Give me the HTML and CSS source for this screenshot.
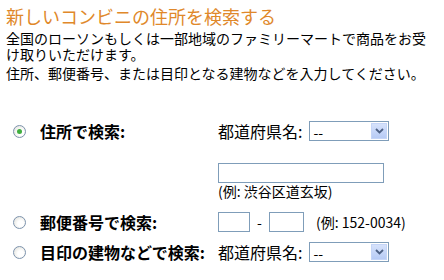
FILE: index.html
```html
<!DOCTYPE html>
<html>
<head>
  <meta charset="utf-8">
  <title>新しいコンビニの住所を検索する</title>
  <link rel="stylesheet" href="styles.css">
</head>
<body>
  <h1 class="title">新しいコンビニの住所を検索する</h1>
  <p class="intro">全国のローソンもしくは一部地域のファミリーマートで商品をお受け取りいただけます。</p>
  <p class="intro second">住所、郵便番号、または目印となる建物などを入力してください。</p>

  <form class="search">
    <div class="row">
      <span class="cell-radio"><input type="radio" name="mode" checked></span>
      <label class="label">住所で検索:</label>
      <span class="field">
        都道府県名:
        <span class="select-wrap">
          <select><option>--</option></select>
          <span class="drop"><svg width="9" height="6" viewBox="0 0 9 6"><path d="M1 1 L4.5 4.5 L8 1" fill="none" stroke="#4d6185" stroke-width="1.8"/></svg></span>
        </span>
      </span>
    </div>

    <div class="row address">
      <span></span>
      <span></span>
      <span class="field stack">
        <input type="text" class="text-long">
        <span class="hint">(例: 渋谷区道玄坂)</span>
      </span>
    </div>

    <div class="row zip">
      <span class="cell-radio"><input type="radio" name="mode"></span>
      <label class="label">郵便番号で検索:</label>
      <span class="field">
        <input type="text" class="zip1">
        <span class="dash">-</span>
        <input type="text" class="zip2">
        <span class="hint zip-hint">(例: 152-0034)</span>
      </span>
    </div>

    <div class="row landmark">
      <span class="cell-radio"><input type="radio" name="mode"></span>
      <label class="label">目印の建物などで検索:</label>
      <span class="field">
        都道府県名:
        <span class="select-wrap">
          <select><option>--</option></select>
          <span class="drop"><svg width="9" height="6" viewBox="0 0 9 6"><path d="M1 1 L4.5 4.5 L8 1" fill="none" stroke="#4d6185" stroke-width="1.8"/></svg></span>
        </span>
      </span>
    </div>
  </form>
</body>
</html>
```

FILE: styles.css
```css
body {
  font-family: "Noto Sans CJK JP", sans-serif;
  background-color: #fff;
  color: #000;
  margin: 0;
  padding: 5px 6px 0 6px;
}
.title {
  font-size: 18px;
  font-weight: normal;
  line-height: 22px;
  color: #e0882a;
  margin: 0;
}
.intro {
  font-size: 14px;
  line-height: 16px;
  margin: 3px 0 0 0;
}
.search {
  margin-top: 40px;
}
.row {
  display: grid;
  grid-template-columns: 34px 178px 1fr;
  align-items: center;
  height: 20px;
}
.row.address {
  margin-top: 22px;
  height: 36px;
  align-items: start;
}
.row.zip {
  margin-top: 13px;
}
.row.landmark {
  margin-top: 10px;
}
.cell-radio {
  display: flex;
  align-items: center;
  padding-left: 7px;
}
.cell-radio input {
  -webkit-appearance: none;
  appearance: none;
  width: 13px;
  height: 13px;
  margin: 0;
  border: 1px solid #7d93ad;
  border-radius: 50%;
  background: radial-gradient(circle at 60% 60%, #ffffff 30%, #dcdcd4 100%);
  box-sizing: border-box;
  position: relative;
}
.cell-radio input:checked::after {
  content: "";
  position: absolute;
  left: 3px;
  top: 3px;
  width: 5px;
  height: 5px;
  border-radius: 50%;
  background: #3fae3f;
}
.label {
  font-size: 16px;
  font-weight: bold;
  line-height: 20px;
  white-space: nowrap;
}
.field {
  display: flex;
  align-items: center;
  font-size: 16px;
  line-height: 20px;
  white-space: nowrap;
}
.field.stack {
  flex-direction: column;
  align-items: flex-start;
}
.select-wrap {
  position: relative;
  display: inline-block;
  margin-left: 7px;
  height: 20px;
}
.select-wrap select {
  -webkit-appearance: none;
  appearance: none;
  width: 80px;
  height: 20px;
  border: 1px solid #7f9db9;
  background: #fff;
  font-family: "Noto Sans CJK JP", sans-serif;
  font-size: 14px;
  padding: 0 0 0 3px;
  margin: 0;
  color: #000;
  border-radius: 0;
}
.drop {
  position: absolute;
  right: 2px;
  top: 2px;
  width: 16px;
  height: 16px;
  background: linear-gradient(#d6e2fb, #b7cbf5);
  border: 1px solid #c5d5f7;
  box-sizing: border-box;
  display: flex;
  align-items: center;
  justify-content: center;
  pointer-events: none;
}
input[type="text"] {
  height: 20px;
  border: 1px solid #7f9db9;
  box-sizing: border-box;
  margin: 0;
  padding: 0 2px;
}
.text-long {
  width: 166px;
}
.hint {
  font-size: 14px;
  line-height: 16px;
}
.zip1 {
  width: 32px;
}
.zip2 {
  width: 35px;
}
.dash {
  font-size: 14px;
  width: 19px;
  text-align: center;
}
.zip-hint {
  margin-left: 12px;
}
```
